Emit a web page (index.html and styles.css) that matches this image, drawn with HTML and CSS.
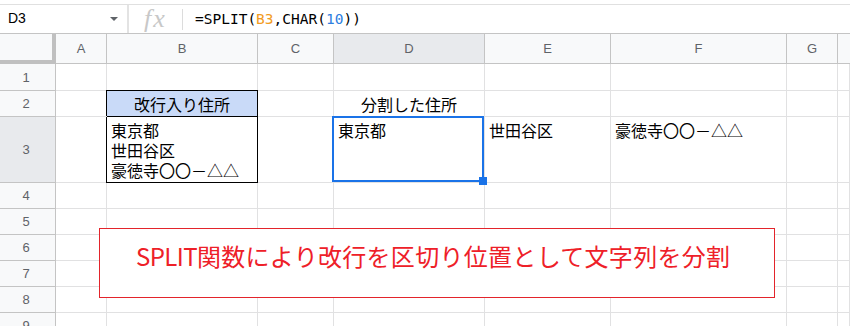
FILE: index.html
```html
<!DOCTYPE html>
<html lang="ja">
<head>
<meta charset="utf-8">
<title>SPLIT</title>
<link rel="stylesheet" href="styles.css">
</head>
<body>
<div class="fbar">
  <div class="fbar-in">
    <div class="namebox"><span class="name">D3</span><svg class="caret" width="8" height="4" viewBox="0 0 8 4"><path d="M0 0H8L4 4Z" fill="#5f6368"/></svg></div>
    <div class="fx">fx</div>
    <div class="sep"></div>
    <div class="formula">=SPLIT(<span class="ref">B3</span>,CHAR(<span class="num">10</span>))</div>
  </div>
</div>
<div class="sheet">
  <div class="grid">
    <div class="corner"></div><div class="ch">A</div><div class="ch">B</div><div class="ch">C</div><div class="ch sel">D</div><div class="ch">E</div><div class="ch">F</div><div class="ch">G</div><div class="ch last"></div>

    <div class="rh">1</div><div></div><div></div><div></div><div></div><div></div><div></div><div></div><div></div>

    <div class="rh">2</div><div></div><div class="lbl">改行入り住所</div><div></div><div class="center">分割した住所</div><div></div><div></div><div></div><div></div>

    <div class="rh sel">3</div><div></div><div class="boxed txt"><div class="ln">東京都</div><div class="ln">世田谷区</div><div class="ln">豪徳寺〇〇－△△</div></div><div></div><div class="txt">東京都</div><div class="txt">世田谷区</div><div class="txt">豪徳寺〇〇－△△</div><div></div><div></div>

    <div class="rh">4</div><div></div><div></div><div></div><div></div><div></div><div></div><div></div><div></div>
    <div class="rh">5</div><div></div><div></div><div></div><div></div><div></div><div></div><div></div><div></div>
    <div class="rh">6</div><div></div><div></div><div></div><div></div><div></div><div></div><div></div><div></div>
    <div class="rh">7</div><div></div><div></div><div></div><div></div><div></div><div></div><div></div><div></div>
    <div class="rh">8</div><div></div><div></div><div></div><div></div><div></div><div></div><div></div><div></div>
    <div class="rh">9</div><div></div><div></div><div></div><div></div><div></div><div></div><div></div><div></div>
  </div>
  <div class="selection"></div>
  <div class="handle"></div>
  <div class="note"><span class="latin">SPLIT</span>関数により改行を区切り位置として文字列を分割</div>
</div>
</body>
</html>
```
FILE: styles.css
```css
* { box-sizing: border-box; }
body {
  margin: 0;
  width: 850px;
  height: 326px;
  overflow: hidden;
  background: #fff;
  font-family: "Noto Sans CJK JP", sans-serif;
}
.fbar { padding-top: 4px; }
.fbar-in {
  display: flex;
  align-items: center;
  height: 30px;
  border-top: 1px solid #e0e0e0;
  border-bottom: 1px solid #c4c4c4;
}
.namebox {
  width: 129px;
  height: 100%;
  display: flex;
  align-items: center;
  padding: 0 9px 2px 8px;
  border-right: 2px solid #e3e3e3;
}
.name {
  font: 14px "Liberation Sans", Arial, sans-serif;
  color: #000;
}
.caret { margin-left: auto; margin-top: 2px; }
.fx {
  width: 53px;
  padding-left: 15px;
  font: italic 26px "Liberation Serif", serif;
  letter-spacing: 2px;
  color: #c8c8c8;
  line-height: 28px;
}
.sep {
  width: 1px;
  height: 21px;
  background: #dcdcdc;
}
.formula {
  margin-left: 12px;
  font: 14.5px "DejaVu Sans Mono", monospace;
  color: #000;
}
.ref { color: #f29b21; }
.num { color: #2e7ee0; }

.sheet { position: relative; }
.grid {
  display: grid;
  grid-template-columns: 56px 51px 151px 76px 151px 126px 176px 51px 1fr;
  grid-template-rows: 30px 27px 26px 66px repeat(6, 26px);
}
.grid > div {
  border-right: 1px solid #e1e1e2;
  border-bottom: 1px solid #e1e1e2;
  min-width: 0;
  font-size: 16px;
  color: #000;
}
.grid > .corner {
  background: #f8f9fa;
  border-right: 4px solid #c0c0c0;
  border-bottom: 4px solid #c0c0c0;
}
.grid > .ch,
.grid > .rh {
  background: #f8f9fa;
  border-color: #c4c4c4;
  display: flex;
  align-items: center;
  justify-content: center;
  font: 13px "Liberation Sans", Arial, sans-serif;
  color: #5f6368;
}
.grid > .rh { padding-right: 3px; }
.grid > .ch.last { border-right: none; }
.grid > .sel { background: #e8eaed; }
.grid > .lbl {
  background: #c9daf8;
  border-right-color: #000;
  border-bottom-color: #000;
  box-shadow: -1px -1px 0 #000, 0 -1px 0 #000;
  display: flex;
  align-items: center;
  justify-content: center;
  line-height: 20px;
}
.grid > .center {
  display: flex;
  align-items: center;
  justify-content: center;
  line-height: 20px;
}
.grid > .txt {
  padding: 3px 3px 0 4px;
  line-height: 20px;
  white-space: nowrap;
}
.ln { height: 20px; }
.grid > .boxed {
  border-right-color: #000;
  border-bottom-color: #000;
  box-shadow: -1px 0 0 #000;
}
.selection {
  position: absolute;
  left: 332px;
  top: 82px;
  width: 152px;
  height: 66px;
  border: 2px solid #1a73e8;
}
.handle {
  position: absolute;
  left: 479px;
  top: 143px;
  width: 8px;
  height: 8px;
  background: #1a73e8;
}
.note {
  position: absolute;
  left: 99px;
  top: 194px;
  width: 676px;
  height: 70px;
  border: 1px solid #e3242b;
  background: #fff;
  padding: 10px 0 0 36px;
  font-size: 24px;
  line-height: 34px;
  letter-spacing: 0.3px;
  color: #ee2028;
  white-space: nowrap;
}
.latin { letter-spacing: -0.6px; }
```
